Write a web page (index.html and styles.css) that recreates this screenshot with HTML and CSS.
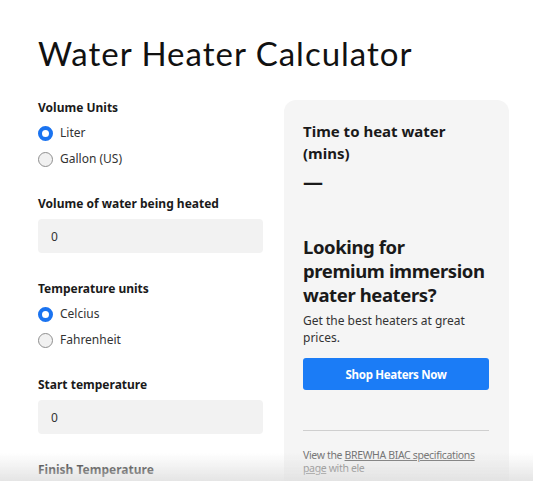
FILE: index.html
```html
<!DOCTYPE html>
<html lang="en">
<head>
<meta charset="utf-8">
<title>Water Heater Calculator</title>
<link rel="stylesheet" href="styles.css">
</head>
<body>
<div class="page">
  <h1 class="title">Water Heater Calculator</h1>
  <div class="layout">
    <form class="form">
      <div class="group choice">
        <div class="label">Volume Units</div>
        <label class="radio"><span class="dot on"></span>Liter</label>
        <label class="radio"><span class="dot"></span>Gallon (US)</label>
      </div>
      <div class="group field">
        <div class="label">Volume of water being heated</div>
        <div class="input">0</div>
      </div>
      <div class="group choice">
        <div class="label">Temperature units</div>
        <label class="radio"><span class="dot on"></span>Celcius</label>
        <label class="radio"><span class="dot"></span>Fahrenheit</label>
      </div>
      <div class="group field">
        <div class="label">Start temperature</div>
        <div class="input">0</div>
      </div>
      <div class="group field">
        <div class="label">Finish Temperature</div>
        <div class="input">0</div>
      </div>
    </form>
    <aside class="card">
      <div class="result-title">Time to heat water (mins)</div>
      <div class="result-value">—</div>
      <h2 class="promo-title">Looking for<br>premium immersion water heaters?</h2>
      <p class="promo-text">Get the best heaters at great prices.</p>
      <a class="btn" href="#">Shop Heaters Now</a>
      <hr class="rule">
      <p class="note">View the <a href="#">BREWHA BIAC specifications page</a> with ele</p>
    </aside>
  </div>
</div>
<div class="fade"></div>
</body>
</html>
```
FILE: styles.css
```css
* { box-sizing: border-box; }
html, body { margin: 0; padding: 0; background: #fff; overflow: hidden; }
body { font-family: "Noto Sans", sans-serif; color: #1a1a1a; }
.page { padding: 0 24px 0 38px; }
.title {
  font-family: "Lato", sans-serif;
  font-weight: 400;
  font-size: 33px;
  letter-spacing: 1px;
  line-height: 40px;
  margin: 0;
  padding-top: 33px;
  color: #111;
}
.layout {
  display: grid;
  grid-template-columns: 225px 225px;
  column-gap: 21px;
  margin-top: 27px;
}
.form { display: flex; flex-direction: column; }
.group { display: flex; flex-direction: column; }
.group.choice { margin-bottom: 24px; }
.group.field { margin-bottom: 28px; }
.label { font-size: 12px; font-weight: 700; line-height: 16px; margin-bottom: 4px; }
.field .label { margin-bottom: 7px; }
.radio { display: flex; align-items: center; font-size: 12px; line-height: 18px; color: #333; height: 26px; }
.dot { width: 15px; height: 15px; border-radius: 50%; border: 1px solid #8f8f8f; background: #f1f1f1; margin-right: 7px; }
.dot.on { border: 4px solid #1a73f0; background: #fff; }
.input { background: #f2f2f2; border-radius: 4px; height: 34px; display: flex; align-items: center; padding-left: 13px; font-size: 12px; color: #333; }
.card {
  background: #f5f5f5;
  border-radius: 12px;
  padding: 20px 20px 20px 19px;
  height: 420px;
}
.result-title { font-size: 15px; font-weight: 700; line-height: 22px; }
.result-value { font-size: 20px; font-weight: 700; line-height: 20px; margin-top: 8px; }
.promo-title { font-size: 18.5px; font-weight: 700; letter-spacing: -0.4px; line-height: 24px; margin: 43px -4px 0 0; }
.promo-text { font-size: 12px; line-height: 17px; margin: 5px 0 0; color: #333; }
.btn { display: flex; justify-content: center; align-items: center; height: 32px; margin-top: 12px; background: #1b7cf6; color: #fff; border-radius: 3px; text-decoration: none; font-size: 11.5px; font-weight: 700; letter-spacing: -0.3px; }
.rule { border: 0; border-top: 1.5px solid #cfcfcf; margin: 40px 0 0; }
.note { font-size: 10.5px; line-height: 13px; color: #707070; margin: 18px 0 0; letter-spacing: -0.35px; }
.note a { color: #707070; text-decoration: underline; }
.fade { position: fixed; left: 0; right: 0; bottom: 0; height: 28px; background: linear-gradient(to bottom, rgba(230,230,230,0), rgba(222,222,222,0.8)); pointer-events: none; }
```
